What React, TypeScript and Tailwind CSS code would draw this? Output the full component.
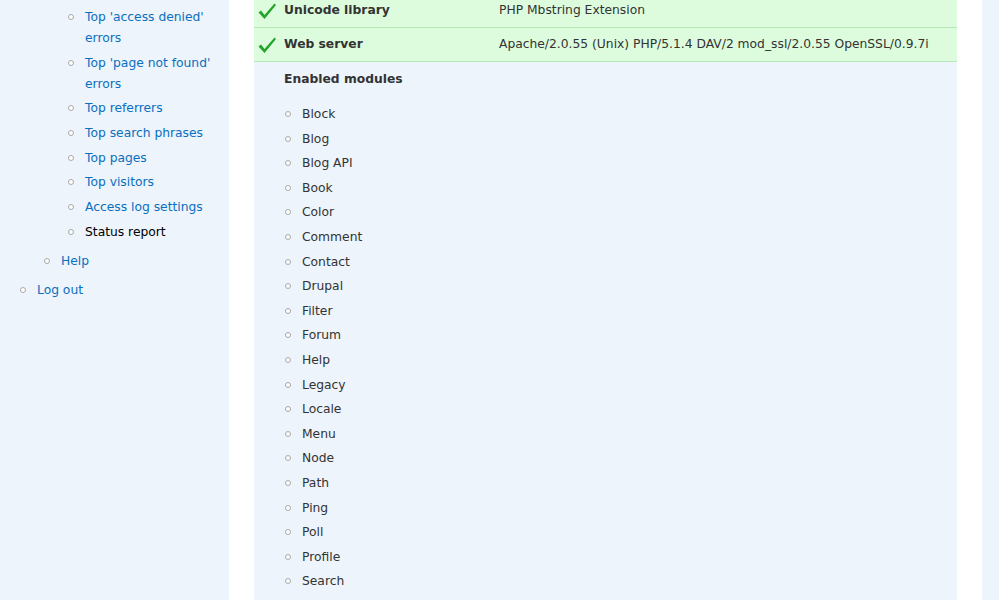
import React from 'react';

const SIDE_LINKS = [
  "Top 'access denied' errors",
  "Top 'page not found' errors",
  'Top referrers',
  'Top search phrases',
  'Top pages',
  'Top visitors',
  'Access log settings',
];

const MODULES = [
  'Block', 'Blog', 'Blog API', 'Book', 'Color', 'Comment', 'Contact', 'Drupal', 'Filter', 'Forum',
  'Help', 'Legacy', 'Locale', 'Menu', 'Node', 'Path', 'Ping', 'Poll', 'Profile', 'Search',
];

const STATUS = [
  { label: 'Unicode library', value: 'PHP Mbstring Extension' },
  { label: 'Web server', value: 'Apache/2.0.55 (Unix) PHP/5.1.4 DAV/2 mod_ssl/2.0.55 OpenSSL/0.9.7i' },
];

function Bullet() {
  return <span className="absolute left-[-17px] top-[7px] h-[6px] w-[6px] rounded-full border border-[#a8a8a8] bg-white" />;
}

function Check() {
  return (
    <svg width="20" height="18" viewBox="0 0 20 18" className="block">
      <path d="M1.5 10.5 L4 8.5 L7.5 13 L17.5 1.5 L19 3 L7.5 17 Z" fill="#22a52a" />
    </svg>
  );
}

export default function App() {
  return (
    <div className="flex h-[600px] w-[999px] overflow-hidden bg-white text-[12.3px] font-['DejaVu_Sans',sans-serif]">
      <aside className="w-[229px] shrink-0 bg-[#edf4fb] pl-[37px] pt-[7px]">
        <ul className="leading-[21px]">
          <li className="relative">
            <ul className="pl-[24px]">
              <li className="relative">
                <ul className="flex flex-col gap-[3.7px] pl-[24px]">
                  {SIDE_LINKS.map((t) => (
                    <li key={t} className="relative text-[#0a6fc0]">
                      <Bullet />
                      {t}
                    </li>
                  ))}
                  <li className="relative text-black">
                    <Bullet />
                    Status report
                  </li>
                </ul>
              </li>
              <li className="relative mt-[8px] text-[#0a6fc0]">
                <Bullet />
                Help
              </li>
            </ul>
          </li>
          <li className="relative mt-[8px] text-[#0a6fc0]">
            <Bullet />
            Log out
          </li>
        </ul>
      </aside>
      <div className="w-[25px] shrink-0" />
      <main className="w-[703px] shrink-0 bg-[#edf4fb] text-[#333]">
        <div className="-mt-[6px]">
          {STATUS.map((r) => (
            <div key={r.label} className="flex h-[34px] items-center border-b border-[#b8e6b8] bg-[#ddfcdd]">
              <div className="w-[30px] pl-[3px]">
                <Check />
              </div>
              <div className="w-[215px] font-bold">{r.label}</div>
              <div>{r.value}</div>
            </div>
          ))}
        </div>
        <div className="pl-[30px] pt-[7px]">
          <h3 className="font-bold leading-[20px]">Enabled modules</h3>
          <ul className="mt-[15px] flex flex-col gap-[3.6px] pl-[18px] leading-[21px]">
            {MODULES.map((m) => (
              <li key={m} className="relative">
                <Bullet />
                {m}
              </li>
            ))}
          </ul>
        </div>
      </main>
      <div className="w-[25px] shrink-0" />
      <div className="flex-1 bg-[#edf4fb]" />
    </div>
  );
}
